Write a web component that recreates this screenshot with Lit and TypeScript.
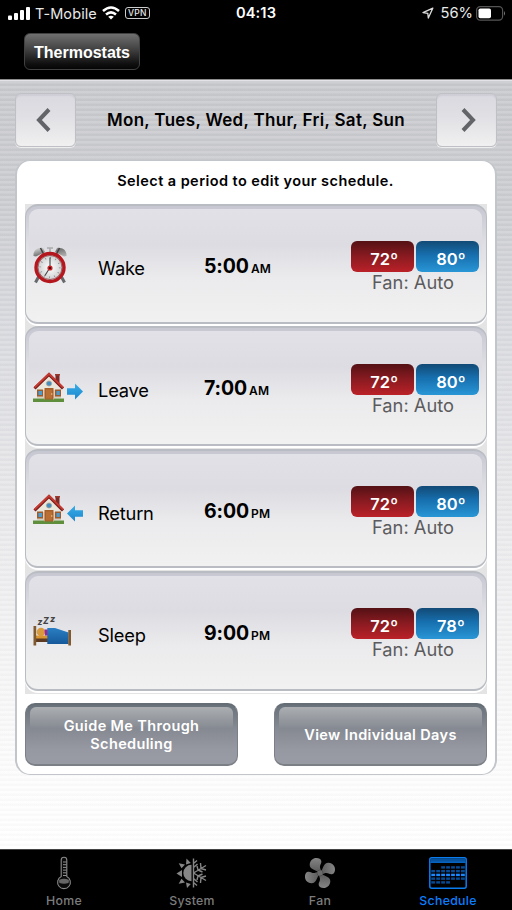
import { LitElement, html, css, svg } from "lit";
import { customElement, property } from "lit/decorators.js";

const clock = html`<svg width="36" height="38" viewBox="0 0 36 38">
  <defs>
    <linearGradient id="bell" x1="0" y1="0" x2="1" y2="1"><stop offset="0" stop-color="#e4e4e4"/><stop offset=".5" stop-color="#777"/><stop offset="1" stop-color="#bbb"/></linearGradient>
    <radialGradient id="face"><stop offset="0" stop-color="#fff"/><stop offset="1" stop-color="#c8cacb"/></radialGradient>
  </defs>
  <path d="M6 30L2.500 36.500M28 30L31.500 36.500" stroke="#666a6c" stroke-width="3"/>
  <path d="M.5 10C0 5 4 1 10 2L12 6L3 10.500Z M33.500 10C34 5 30 1 24 2L22 6L31 10.500Z" fill="url(#bell)"/>
  <path d="M7.500 2l3 6M26.500 2l-3 6" stroke="#444" stroke-width="1.600"/>
  <path d="M14 2h6M17 2v5" stroke="#aaa" stroke-width="1.600"/>
  <circle cx="17" cy="21.500" r="14" fill="url(#face)" stroke="#b5171e" stroke-width="3.400"/>
  <circle cx="17" cy="21.500" r="12" fill="none" stroke="#8b3035" stroke-width=".7"/>
  <circle cx="17" cy="21.500" r="9.800" fill="none" stroke="#888" stroke-width="1.800" stroke-dasharray=".8 4.330"/>
  <path d="M17 21.500V11.500M17 21.500L12 29.500" stroke="#444" stroke-width="1.100"/>
  <circle cx="17" cy="22" r="2.600" fill="#d2222a"/><circle cx="17" cy="22" r="1.200" fill="#411"/>
</svg>`;

const house = svg`
  <path d="M3 17L16 4L28 17V28H4Z" fill="#e9e6dc"/>
  <path d="M22.500 2.500h4v10l-4-4z" fill="#7b2a25"/><path d="M22 2h5v1.500h-5z" fill="#9c3a31"/>
  <path d="M1.500 16.500L16 2.500L30 16.500" fill="none" stroke="#7a1d1a" stroke-width="3"/>
  <path d="M1.500 15.500L16 1.800L30 15.500" fill="none" stroke="#c63a31" stroke-width="1.800"/>
  <path d="M4 18h24v8H4z" fill="#d9cdbd"/>
  <path d="M4 17.500h6v7H4zM22 17.500h6v7h-6z" fill="#9c5b2b"/>
  <path d="M5.500 19h3.500v4H5.500zM23.500 19h3.300v4h-3.300z" fill="#4a9bd0"/>
  <circle cx="16" cy="11.500" r="2.600" fill="#3f8fc6" stroke="#b9a58c" stroke-width=".8"/>
  <path d="M11.500 16h9v12h-9z" fill="#a8602a"/><path d="M13 17.500h6v9h-6z" fill="#b96f33"/><circle cx="18.700" cy="22" r=".8" fill="#ecc77e"/>
  <path d="M0 26.500h11.500v1H21v-1H31v3.500H0z" fill="#5f8f3d"/>`;

const arrowFill = svg`<defs><linearGradient id="arrow" x1="0" y1="0" x2="0" y2="1"><stop offset="0" stop-color="#37aee9"/><stop offset="1" stop-color="#1b86cc"/></linearGradient></defs>`;

const leave = html`<svg width="51" height="31" viewBox="0 0 51 31">${arrowFill}${house}
  <path d="M34 16.300H42V11.500L50 19.500L42 27.500V22.700H34Z" fill="url(#arrow)"/></svg>`;
const back = html`<svg width="51" height="31" viewBox="0 0 51 31">${arrowFill}${house}
  <path d="M50 16.300H42V11.500L34 19.500L42 27.500V22.700H50Z" fill="url(#arrow)"/></svg>`;

const bed = html`<svg width="40" height="42" viewBox="0 -7 40 42">
  <defs><linearGradient id="quilt" x1="0" y1="0" x2="0" y2="1"><stop offset="0" stop-color="#2a7fc3"/><stop offset="1" stop-color="#15599b"/></linearGradient></defs>
  <path d="M2 20h15v4H2z" fill="#5c3b22"/><path d="M3 17.500h12v3H3z" fill="#d9952f"/>
  <circle cx="8" cy="14" r="4.300" fill="#d99a3d"/><path d="M11.500 11.500h4v6h-3.500z" fill="#9b259b"/>
  <path d="M14.300 10H22L35.500 14.500V26H14.300Z" fill="url(#quilt)"/>
  <path d="M.5 8H3.200V27.500H.5zM35.300 12H38V27.500H35.300z" fill="#80592f"/>
  <g font-family="Inter, sans-serif" font-weight="800" font-style="italic" fill="#444"><text x="4.500" y="7" font-size="8.500">z</text><text x="10" y="5.500" font-size="8.500">Z</text><text x="17" y="4" font-size="9">z</text></g>
</svg>`;

const thermo = html`<svg width="16" height="34" viewBox="0 0 16 34">
  <path d="M5.200 20.500V4A2.800 2.800 0 0 1 10.800 4V20.500A6.400 6.400 0 1 1 5.200 20.500Z" fill="#0a0a0a" stroke="#8a8a8a" stroke-width="1.100"/>
  <path d="M3.200 23.700Q8 22 12.800 23.700A5.200 5.200 0 0 1 12.500 27Q8 28.500 3.500 27A5 5 0 0 1 3.200 23.700Z" fill="#666"/>
  <path d="M7 6h3.500M7 8.700h3.500M7 11.400h3.500M7 14.100h3.500M7 16.800h3.500M7 19.500h3.500" stroke="#909090" stroke-width="1"/>
</svg>`;

const system = html`<svg width="32" height="32" viewBox="0 0 32 32" fill="#858585">
  <path d="M15.500 7.800V24.200A8.200 8.200 0 0 1 15.500 7.800Z"/>
  <path d="M10.500 1.500L14.800 6L10 7.500Z M2.700 6.200L9 7.400L5.500 11.300Z M.5 16.500L6 13V20Z M2.700 26.800L5.500 21.700L9 25.600Z M11 31L10 25.600L14.800 27Z"/>
  <path d="M17.500 1.500V30.500M17.500 16L30 8.500M17.500 16L30 23.500M17.500 6.500L21 3.500M17.500 10.500L21.500 7M17.500 21.500L21.500 25M17.500 25.500L21 28.500M25 11.500L24.500 6M25 11.500L30 13M22 13L21 9M22 13L26.500 15M25 20.500L24.500 26M25 20.500L30 19M22 19L21 23M22 19L26.500 17" fill="none" stroke="#858585" stroke-width="1.400"/>
</svg>`;

const fan = html`<svg width="32" height="32" viewBox="0 0 32 32">
  <defs><linearGradient id="blade" x1="0" y1="0" x2="0" y2="1"><stop offset="0" stop-color="#858585"/><stop offset="1" stop-color="#595959"/></linearGradient></defs>
  ${[0, 90, 180, 270].map(a => svg`<path transform="rotate(${a} 16 16)" d="M15 15.500C11.500 12.500 5.500 12.500 5.700 7.500C6 3 9.500 .8 12.500 1C18 1.200 18 5 16.500 7.500C15.500 9.500 16 11.500 17.500 14.500Z" fill="url(#blade)"/>`)}
  <circle cx="16" cy="16" r="3" fill="#6a6a6a" stroke="#484848" stroke-width=".7"/>
</svg>`;

const calendarRows = [[2, 6], [0, 6], [0, 6], [0, 6], [0, 3]];
const calendar = html`<svg width="38" height="32" viewBox="0 0 38 32">
  <rect x=".8" y=".8" width="36.400" height="30.400" rx="2" fill="#000" stroke="#0a7cf0" stroke-width="1.500"/>
  <path d="M1.500 1.500H36.500V5H1.500Z" fill="#07529f"/>
  ${calendarRows.map(([from, to], r) => Array.from({ length: to - from + 1 }, (_, i) =>
    svg`<rect x=${2.3 + (from + i) * 4.95} y=${9.2 + r * 3.75} width="3.800" height="2.400" fill=${r === 2 ? "#1a87ff" : "#084a92"}/>`))}
  <path d="M1.500 5.300H36.500" stroke="#0a7cf0"/>
</svg>`;

@customElement("status-bar")
class StatusBar extends LitElement {
  static styles = css`
    :host { display: grid; grid-template-columns: 1fr auto 1fr; height: 26px; align-items: center; padding: 0 6px 0 8px; font-size: 15px; color: #e9e9e9; box-sizing: border-box; }
    .side { display: flex; align-items: center; }
    .end { justify-content: flex-end; }
    .carrier { margin: 0 5px; font-size: 14.500px; letter-spacing: .1px; }
    .wifi { margin-right: 5px; }
    .vpn { font-size: 8.500px; font-weight: 500; border: 1px solid #ccc; border-radius: 3px; width: 23px; height: 10px; line-height: 10.500px; text-align: center; letter-spacing: .3px; }
    .clock { font-weight: 600; letter-spacing: .1px; color: #fff; font-size: 14.700px; padding-right: 2px; }
    .percent { margin: 0 3px 0 7px; font-size: 14.700px; }
  `;
  render() {
    return html`
      <div class="side">
        <svg width="22" height="14" viewBox="0 0 22 14" fill="#fff"><rect y="9.500" width="4" height="4.500" rx="1"/><rect x="6" y="7" width="4" height="7" rx="1"/><rect x="12" y="4" width="4" height="10" rx="1"/><rect x="18" y="1" width="4" height="13" rx="1"/></svg>
        <span class="carrier">T-Mobile</span>
        <svg class="wifi" width="18" height="14" viewBox="0 0 18 14" fill="none" stroke="#fff" stroke-width="2.500"><path d="M1 5Q9-2 17 5M4 8.500Q9 4.200 14 8.500"/><path d="M9 13.500L6.200 10.800Q9 8.500 11.800 10.800Z" fill="#fff" stroke="none"/></svg>
        <span class="vpn">VPN</span>
      </div>
      <span class="clock">04:13</span>
      <div class="side end">
        <svg width="12" height="12" viewBox="0 0 12 12"><path d="M10.800 1.200L1 5.600L5.800 6.400L6.300 11Z" fill="none" stroke="#ddd" stroke-width="1.300" stroke-linejoin="round"/></svg>
        <span class="percent">56%</span>
        <svg width="30" height="15" viewBox="0 0 30 15"><rect x=".6" y=".6" width="26" height="13.600" rx="3.600" fill="none" stroke="#555" stroke-width="1.200"/><rect x="2.500" y="2.500" width="12.500" height="9.800" rx="1.800" fill="#fff"/><path d="M28 5Q30 7.400 28 9.800Z" fill="#777"/></svg>
      </div>`;
  }
}

@customElement("period-row")
class PeriodRow extends LitElement {
  @property({ attribute: false }) icon: unknown;
  @property() label = "";
  @property() time = "";
  @property() half = "";
  @property() heat = "";
  @property() cool = "";
  static styles = css`
    :host { display: block; background: #e4e4e5; height: 122.400px; }
    .card { height: 119.500px; box-sizing: border-box; border: solid #b9bdc3; border-width: 2px 1.500px 2px; border-radius: 13px; padding: 3px 4px 0 3px; background: linear-gradient(#c6c7d1, #dddde3 30%, #ebebed 62%, #f1f1f1); box-shadow: 0 2px 0 #fff; }
    .inner { display: grid; grid-template-columns: 65px 106px 147px 1fr; align-items: center; height: 111.500px; border-radius: 9px 9px 10px 10px; padding-left: 4px; box-sizing: border-box; background: linear-gradient(#e2e1e8, #dddce2 32%, #ebebed 62%, #f1f1f1); }
    .icon, .icon svg { display: block; }
    .label { font-size: 18.300px; letter-spacing: -.2px; padding-top: 6px; }
    .time { font-size: 19.500px; font-weight: 700; white-space: nowrap; padding-top: 2px; letter-spacing: -.1px; }
    .half { font-size: 12px; font-weight: 600; margin-left: 2px; letter-spacing: .2px; }
    .set { width: 128px; padding-top: 5px; }
    .temps { display: flex; gap: 1.500px; }
    .temp { width: 63.500px; height: 31px; border-radius: 6px; font-size: 16.500px; font-weight: 600; color: #fff; line-height: 37px; text-align: center; box-sizing: border-box; padding-left: 3px; }
    .heat { background: linear-gradient(#541114, #851a20 45%, #bb2128); }
    .cool { background: linear-gradient(#124a76, #176fae 45%, #2996d6); padding-left: 7px; }
    .fan { font-size: 18.300px; line-height: 21px; color: #5b5b5d; text-align: center; padding-right: 4px; }
  `;
  render() {
    return html`<div class="card"><div class="inner">
      <div class="icon">${this.icon}</div>
      <div class="label">${this.label}</div>
      <div class="time">${this.time}<span class="half">${this.half}</span></div>
      <div class="set">
        <div class="temps"><div class="temp heat">${this.heat}º</div><div class="temp cool">${this.cool}º</div></div>
        <div class="fan">Fan: Auto</div>
      </div>
    </div></div>`;
  }
}

const periods = [
  { icon: clock, label: "Wake", time: "5:00", half: "AM", heat: "72", cool: "80" },
  { icon: leave, label: "Leave", time: "7:00", half: "AM", heat: "72", cool: "80" },
  { icon: back, label: "Return", time: "6:00", half: "PM", heat: "72", cool: "80" },
  { icon: bed, label: "Sleep", time: "9:00", half: "PM", heat: "72", cool: "78" },
];

const tabs = [
  { icon: thermo, label: "Home", active: false },
  { icon: system, label: "System", active: false },
  { icon: fan, label: "Fan", active: false },
  { icon: calendar, label: "Schedule", active: true },
];

@customElement("app-root")
class AppRoot extends LitElement {
  static styles = css`
    :host { display: flex; flex-direction: column; height: 910px; width: 512px; background: #000; font-family: Inter, "Liberation Sans", sans-serif; overflow: hidden; }
    .nav { height: 54px; box-sizing: border-box; padding: 7px 24px 0; border-bottom: 1px solid #8c8c8c; }
    .nav-button { width: 116px; height: 37px; box-sizing: border-box; border: 1.500px solid #414141; border-radius: 6px; background: linear-gradient(#707070, #404040 45%, #101010 85%, #050505); color: #fff; font: bold 16px/37px "Liberation Sans", sans-serif; text-align: center; }
    .content { flex: 1; box-sizing: border-box; padding: 12px 15px 0; border-top: 1px solid #e4e4e8;
      background: repeating-linear-gradient(rgba(255,255,255,.14) 0 2px, rgba(130,130,140,.035) 3px 5px), linear-gradient(#c7c8cc, #cbccd0 16%, #d8d9de 32%, #e6e6e9 52%, #f4f4f5 75%, #fdfdfd 91%, #fff); }
    .days { display: flex; align-items: center; justify-content: space-between; height: 54px; }
    .step { display: flex; align-items: center; justify-content: center; width: 61px; height: 54px; box-sizing: border-box; border: 1.500px solid #bfc0c6; border-radius: 6px; background: linear-gradient(#dad9e0, #dedee3 35%, #f0f0f0); box-shadow: inset 0 2px 1px #cfced7, 0 1px 0 #eee; }
    .prev { padding-right: 4px; }
    .next { padding-left: 2px; }
    .title { font-size: 17px; font-weight: 600; letter-spacing: .32px; }
    .panel { margin-top: 13px; height: 615px; box-sizing: border-box; border: 2px solid #c2c6cb; border-top-width: 1px; border-bottom-width: 1.500px; border-radius: 15px; background: #fff; padding: 0 8px; }
    .hint { height: 43px; line-height: 40px; font-size: 14.500px; font-weight: 600; text-align: center; letter-spacing: .43px; padding-right: 1px; }
    .rows { display: flex; flex-direction: column; }
    .actions { display: flex; justify-content: space-between; margin-top: 9px; }
    .action { width: 213px; height: 63px; box-sizing: border-box; border: solid #7b7f86; border-top-color: #666e75; border-width: 2px 1px 2px; border-radius: 10px; padding: 2px 4px 0; background: linear-gradient(#68717a, #858991 38%, #9799a2 75%, #9a9ca5); }
    .face { display: flex; align-items: center; justify-content: center; height: 57px; box-sizing: border-box; padding-bottom: 1px; border-radius: 6px; background: linear-gradient(#abafb2, #858991 38%, #9799a2 75%, #9a9ca5); color: #fff; text-align: center; font-size: 14.500px; line-height: 17.500px; font-weight: 600; letter-spacing: .36px; }
    .tabs { display: grid; grid-template-columns: repeat(4, 1fr); height: 61px; box-sizing: border-box; border-top: 1px solid #444; background: #000; }
    .tab { display: flex; flex-direction: column; align-items: center; color: #7c7c7c; font-size: 12.300px; font-weight: 500; letter-spacing: .3px; }
    .active { color: #0a7fff; }
    .glyph { display: flex; align-items: center; height: 34px; padding: 6px 0 3px; }
  `;
  render() {
    return html`
      <status-bar></status-bar>
      <div class="nav"><div class="nav-button">Thermostats</div></div>
      <div class="content">
        <div class="days">
          <div class="step prev"><svg width="16" height="24" viewBox="0 0 16 24"><path d="M13 1.500L3 12L13 22.500" fill="none" stroke="#626468" stroke-width="4"/></svg></div>
          <div class="title">Mon, Tues, Wed, Thur, Fri, Sat, Sun</div>
          <div class="step next"><svg width="16" height="24" viewBox="0 0 16 24"><path d="M3 1.500L13 12L3 22.500" fill="none" stroke="#626468" stroke-width="4"/></svg></div>
        </div>
        <div class="panel">
          <div class="hint">Select a period to edit your schedule.</div>
          <div class="rows">${periods.map(p => html`<period-row .icon=${p.icon} .label=${p.label} .time=${p.time} .half=${p.half} .heat=${p.heat} .cool=${p.cool}></period-row>`)}</div>
          <div class="actions">
            <div class="action"><div class="face">Guide Me Through<br>Scheduling</div></div>
            <div class="action"><div class="face">View Individual Days</div></div>
          </div>
        </div>
      </div>
      <div class="tabs">${tabs.map(t => html`<div class="tab ${t.active ? "active" : ""}"><div class="glyph">${t.icon}</div><span>${t.label}</span></div>`)}</div>`;
  }
}
